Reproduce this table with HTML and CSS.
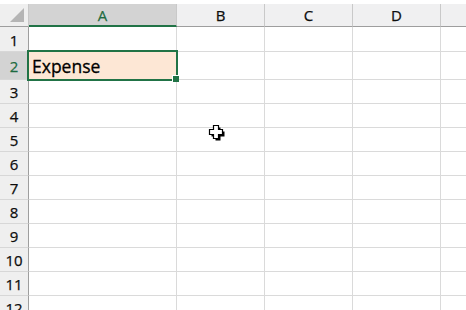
FILE: index.html
```html
<!DOCTYPE html>
<html>
<head>
<meta charset="utf-8">
<link rel="stylesheet" href="styles.css">
</head>
<body>
<div class="sheet">
  <div class="corner"><div class="tri"></div></div>
  <div class="ch sel">A</div>
  <div class="ch">B</div>
  <div class="ch">C</div>
  <div class="ch">D</div>
  <div class="ch last"></div>

  <div class="rh r1">1</div><div class="c r1"></div><div class="c r1"></div><div class="c r1"></div><div class="c r1"></div><div class="c r1 last"></div>
  <div class="rh r2 selr">2</div><div class="c r2 active">Expense<span class="handle"></span></div><div class="c r2"></div><div class="c r2"></div><div class="c r2"></div><div class="c r2 last"></div>
  <div class="rh">3</div><div class="c"></div><div class="c"></div><div class="c"></div><div class="c"></div><div class="c last"></div>
  <div class="rh">4</div><div class="c"></div><div class="c"></div><div class="c"></div><div class="c"></div><div class="c last"></div>
  <div class="rh">5</div><div class="c"></div><div class="c cur-cell"><svg class="cursor" width="17" height="17" viewBox="0 0 17 17"><path d="M6.5 2.5h5v4h4v5h-4v4h-5v-4h-4v-5h4z" fill="#000" transform="translate(1,1)"/><path d="M5.5 1.5h5v4h4v5h-4v4h-5v-4h-4v-5h4z" fill="#fff" stroke="#000" stroke-width="1.2"/></svg></div><div class="c"></div><div class="c"></div><div class="c last"></div>
  <div class="rh">6</div><div class="c"></div><div class="c"></div><div class="c"></div><div class="c"></div><div class="c last"></div>
  <div class="rh">7</div><div class="c"></div><div class="c"></div><div class="c"></div><div class="c"></div><div class="c last"></div>
  <div class="rh">8</div><div class="c"></div><div class="c"></div><div class="c"></div><div class="c"></div><div class="c last"></div>
  <div class="rh">9</div><div class="c"></div><div class="c"></div><div class="c"></div><div class="c"></div><div class="c last"></div>
  <div class="rh">10</div><div class="c"></div><div class="c"></div><div class="c"></div><div class="c"></div><div class="c last"></div>
  <div class="rh">11</div><div class="c"></div><div class="c"></div><div class="c"></div><div class="c"></div><div class="c last"></div>
  <div class="rh">12</div><div class="c"></div><div class="c"></div><div class="c"></div><div class="c"></div><div class="c last"></div>
</div>
</body>
</html>
```
FILE: styles.css
```css
html, body {
  margin: 0;
  padding: 0;
  background: #fff;
  overflow: hidden;
}
body {
  width: 466px;
  height: 310px;
  padding-top: 4px;
  box-sizing: border-box;
  font-family: "Open Sans", "Noto Sans", sans-serif;
}
.sheet {
  display: grid;
  grid-template-columns: 29px 148px 88px 88px 88px 1fr;
  grid-template-rows: 23px 25px 28px repeat(10, 24px);
}
.corner {
  background: #efefef;
  border-right: 1px solid #c8c8c8;
  border-bottom: 1px solid #9e9e9e;
  position: relative;
}
.tri {
  position: absolute;
  right: 4px;
  bottom: 4px;
  width: 0;
  height: 0;
  border-left: 14px solid transparent;
  border-bottom: 14px solid #b5b5b5;
}
.ch {
  background: #f0f0f1;
  border-right: 1px solid #c9c9c9;
  border-bottom: 1px solid #9e9e9e;
  display: flex;
  align-items: center;
  justify-content: center;
  font-size: 15px;
  color: #0d0d0d;
  -webkit-text-stroke: 0.25px currentColor;
  padding-bottom: 1px;
}
.ch.sel {
  background: #d3d3d3;
  color: #1e6b41;
  border-bottom: 2px solid #217346;
  padding-bottom: 0;
}
.ch.last { border-right: none; }
.rh {
  background: #efefef;
  border-right: 1px solid #9e9e9e;
  border-bottom: 1px solid #d7d7d7;
  display: flex;
  align-items: center;
  justify-content: center;
  font-size: 15px;
  color: #0d0d0d;
  -webkit-text-stroke: 0.25px currentColor;
  padding-top: 1px;
}
.rh.selr {
  background: #d3d3d3;
  color: #1e6b41;
}
.c {
  border-right: 1px solid #dadada;
  border-bottom: 1px solid #dadada;
  position: relative;
}
.c.last { border-right: none; }
.active {
  background: #fde7d5;
  outline: 2px solid #217346;
  outline-offset: -1px;
  margin: -1px 0 0 -1px;
  z-index: 2;
  font-size: 17.5px;
  color: #000;
  -webkit-text-stroke: 0.3px #000;
  display: flex;
  align-items: center;
  padding-left: 4px;
  padding-top: 1px;
}
.handle {
  position: absolute;
  right: -3px;
  bottom: -3px;
  width: 6px;
  height: 6px;
  background: #217346;
  border: 1px solid #fff;
  border-right: none;
  border-bottom: none;
}
.cur-cell { overflow: visible; }
.cursor {
  position: absolute;
  left: 31px;
  top: -4px;
  z-index: 3;
}
```
